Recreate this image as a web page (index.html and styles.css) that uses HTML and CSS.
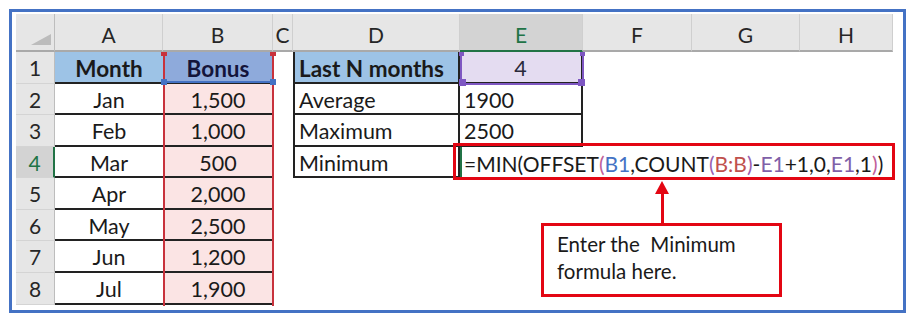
FILE: index.html
```html
<!DOCTYPE html>
<html>
<head>
<meta charset="utf-8">
<link rel="stylesheet" href="styles.css">
</head>
<body>
<div class="frame">
  <div class="sheet">
    <div class="grid">
      <!-- header row -->
      <div class="ch corner"><span class="tri"></span></div>
      <div class="ch">A</div>
      <div class="ch">B</div>
      <div class="ch">C</div>
      <div class="ch">D</div>
      <div class="ch ch-active">E</div>
      <div class="ch">F</div>
      <div class="ch">G</div>
      <div class="ch">H</div>
      <!-- row 1 -->
      <div class="rh">1</div>
      <div class="c ca hdr-blue b">Month</div>
      <div class="c cb hdr-b1 b">Bonus</div>
      <div class="c"></div>
      <div class="c cd hdr-blue b left">Last N months</div>
      <div class="c ce hdr-e1 ctr">4</div>
      <div class="c"></div><div class="c"></div><div class="c"></div>
      <!-- row 2 -->
      <div class="rh">2</div>
      <div class="c ca">Jan</div>
      <div class="c cb">1,500</div>
      <div class="c"></div>
      <div class="c cd left">Average</div>
      <div class="c ce left">1900</div>
      <div class="c"></div><div class="c"></div><div class="c"></div>
      <!-- row 3 -->
      <div class="rh">3</div>
      <div class="c ca">Feb</div>
      <div class="c cb">1,000</div>
      <div class="c"></div>
      <div class="c cd left">Maximum</div>
      <div class="c ce left">2500</div>
      <div class="c"></div><div class="c"></div><div class="c"></div>
      <!-- row 4 -->
      <div class="rh rh-active">4</div>
      <div class="c ca">Mar</div>
      <div class="c cb">500</div>
      <div class="c"></div>
      <div class="c cd left">Minimum</div>
      <div class="c ce-active left formula">=MIN(OFFSET<span class="fk">(</span><span class="fb">B1</span>,COUNT<span class="fq">(</span><span class="fr">B:B</span><span class="fq">)</span>-<span class="fp">E1</span>+1,0,<span class="fp">E1</span>,1<span class="fk">)</span>)</div>
      <div class="c"></div><div class="c"></div><div class="c"></div>
      <!-- row 5 -->
      <div class="rh">5</div>
      <div class="c ca">Apr</div>
      <div class="c cb">2,000</div>
      <div class="c"></div><div class="c"></div><div class="c"></div>
      <div class="c"></div><div class="c"></div><div class="c"></div>
      <!-- row 6 -->
      <div class="rh">6</div>
      <div class="c ca">May</div>
      <div class="c cb">2,500</div>
      <div class="c"></div><div class="c"></div><div class="c"></div>
      <div class="c"></div><div class="c"></div><div class="c"></div>
      <!-- row 7 -->
      <div class="rh">7</div>
      <div class="c ca">Jun</div>
      <div class="c cb">1,200</div>
      <div class="c"></div><div class="c"></div><div class="c"></div>
      <div class="c"></div><div class="c"></div><div class="c"></div>
      <!-- row 8 -->
      <div class="rh">8</div>
      <div class="c ca">Jul</div>
      <div class="c cb">1,900</div>
      <div class="c"></div><div class="c"></div><div class="c"></div>
      <div class="c"></div><div class="c"></div><div class="c"></div>
    </div>

    <!-- range highlight B:B -->
    <div class="sel-b">
      <span class="sq-r sq-tl"></span><span class="sq-r sq-tr"></span>
      <span class="b1-line"></span>
      <span class="sq-b sq-bl"></span><span class="sq-b sq-br"></span>
    </div>
    <!-- range highlight E1 -->
    <div class="sel-e">
      <span class="sq-p sq-ptl"></span><span class="sq-p sq-ptr"></span>
      <span class="sq-p sq-pbl"></span><span class="sq-p sq-pbr"></span>
    </div>

    <!-- annotation -->
    <div class="fbox"></div>
    <svg class="arrow" width="20" height="44" viewBox="0 0 20 44">
      <polygon points="10,0 3,13 17,13" fill="#e30613"/>
      <rect x="9" y="12" width="3" height="32" fill="#e30613"/>
    </svg>
    <div class="callout">Enter the&nbsp; Minimum<br>formula here.</div>
  </div>
</div>
</body>
</html>
```

FILE: styles.css
```css
html, body {
  margin: 0;
  padding: 0;
  background: #fff;
}
.frame {
  box-sizing: border-box;
  margin: 9px 0 0 9px;
  width: 897px;
  height: 304px;
  border: 3px solid #4472c4;
  padding: 2px 0 0 4px;
  background: #fff;
}
.sheet {
  position: relative;
  font-family: Lato, "Open Sans", sans-serif;
  font-size: 21.5px;
  color: #1a1a1a;
}
.grid {
  display: grid;
  grid-template-columns: 39px 108px 110px 20px 167px 123px 109px 108px 93px;
  grid-template-rows: 38px 32px 31px 32px 31px 32px 31px 32px 32px;
}
.grid > div {
  box-sizing: border-box;
  display: flex;
  align-items: center;
  justify-content: center;
  white-space: nowrap;
  min-width: 0;
}
.ch {
  background: #e6e6e6;
  border-right: 1px solid #cfcfcf;
  border-bottom: 2px solid #a9a9a9;
  align-items: flex-end !important;
  padding-bottom: 3px;
  color: #262626;
  font-size: 21px;
}
.ch.corner {
  position: relative;
  border-right: 1px solid #bdbdbd;
}
.tri {
  position: absolute;
  right: 3px;
  bottom: 5px;
  width: 0;
  height: 0;
  border-left: 20px solid transparent;
  border-bottom: 11px solid #bcbcbc;
}
.ch-active {
  background: #d3d3d3;
  color: #217346;
  border-bottom: 2px solid #217346;
}
.rh {
  background: #e6e6e6;
  border-right: 1px solid #bdbdbd;
  border-bottom: 1px solid #d4d4d4;
  color: #262626;
  font-size: 21px;
}
.rh-active {
  background: #d3d3d3;
  color: #217346;
  border-right: 2px solid #217346;
}
.c {
  padding-top: 2px;
}
.ca, .cb {
  border-bottom: 2px solid #222;
}
.cb {
  background: #fbe4e4;
}
.cd {
  border-left: 2px solid #222;
  border-right: 2px solid #222;
  border-bottom: 2px solid #222;
}
.ce {
  border-right: 2px solid #222;
  border-bottom: 2px solid #222;
}
.left {
  justify-content: flex-start !important;
  padding-left: 4px;
}
.ctr {
  justify-content: center;
}
.b {
  font-weight: 700;
  font-size: 22.5px;
}
.hdr-blue {
  background: #9dc3e6;
}
.hdr-b1 {
  background: #8eaadb;
  color: #14143a;
}
.hdr-e1 {
  background: #e4dcf1;
  color: #2a2a3a;
}
.ce-active {
  border-left: 2px solid #217346;
  overflow: visible;
  padding-top: 2px;
}
.formula {
  padding-left: 2px;
  font-size: 21px;
}
.fb { color: #4472c4; }
.fr { color: #c0504d; }
.fp { color: #7f60a8; }
.fk { color: #c0609a; }
.fq { color: #9a5fb0; }

/* selection overlays */
.sel-b {
  position: absolute;
  left: 147px;
  top: 38px;
  width: 111px;
  height: 254px;
  box-sizing: border-box;
  border-left: 2px solid #c8323c;
  border-right: 2px solid #c8323c;
}
.sq-r {
  position: absolute;
  top: 0;
  width: 6px;
  height: 4px;
  background: #c8323c;
}
.sq-tl { left: -4px; }
.sq-tr { right: -4px; }
.b1-line {
  position: absolute;
  left: 0;
  right: 0;
  top: 29px;
  height: 2px;
  background: #4472c4;
}
.sq-b {
  position: absolute;
  top: 27px;
  width: 6px;
  height: 6px;
  background: #4472c4;
}
.sq-bl { left: -4px; }
.sq-br { right: -4px; }

.sel-e {
  position: absolute;
  left: 444px;
  top: 38px;
  width: 124px;
  height: 33px;
  box-sizing: border-box;
  border: 2px solid #7e57c2;
  border-top: none;
}
.sq-p {
  position: absolute;
  background: #7e57c2;
}
.sq-ptl { left: -3px; top: 0; width: 5px; height: 4px; }
.sq-ptr { right: -3px; top: 0; width: 5px; height: 4px; }
.sq-pbl { left: -3px; bottom: -3px; width: 7px; height: 7px; }
.sq-pbr { right: -3px; bottom: -3px; width: 7px; height: 7px; }

.fbox {
  position: absolute;
  left: 437px;
  top: 129px;
  width: 442px;
  height: 37px;
  box-sizing: border-box;
  border: 3px solid #e30613;
}
.arrow {
  position: absolute;
  left: 636px;
  top: 167px;
}
.callout {
  position: absolute;
  left: 525px;
  top: 209px;
  width: 241px;
  height: 74px;
  box-sizing: border-box;
  border: 3px solid #e30613;
  background: #fff;
  padding: 5px 0 0 13px;
  font-size: 20.5px;
  line-height: 27px;
  color: #1a1a1a;
}
```
